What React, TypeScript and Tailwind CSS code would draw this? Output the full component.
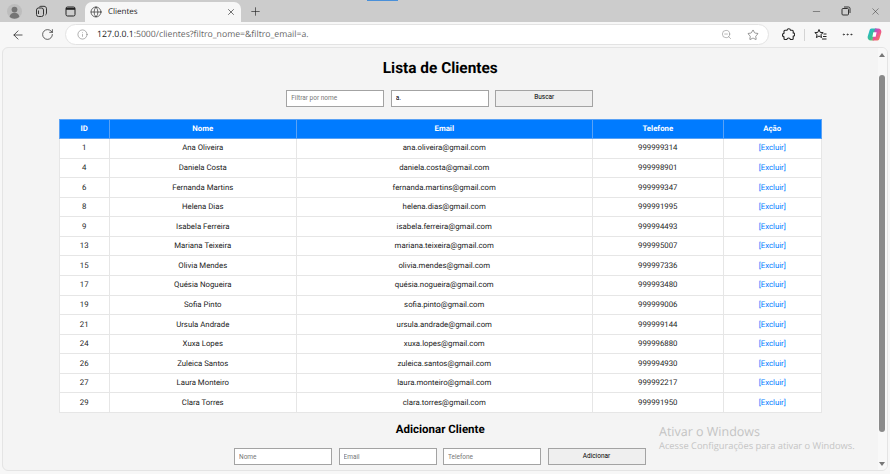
import { ArrowLeft, RotateCw, Info, ZoomOut, Star, MoreHorizontal, Minus, X, Plus, Globe } from "lucide-react";

const rows = [
  [1, "Ana Oliveira", "ana.oliveira@gmail.com", "999999314"],
  [4, "Daniela Costa", "daniela.costa@gmail.com", "999998901"],
  [6, "Fernanda Martins", "fernanda.martins@gmail.com", "999999347"],
  [8, "Helena Dias", "helena.dias@gmail.com", "999991995"],
  [9, "Isabela Ferreira", "isabela.ferreira@gmail.com", "999994493"],
  [13, "Mariana Teixeira", "mariana.teixeira@gmail.com", "999995007"],
  [15, "Olivia Mendes", "olivia.mendes@gmail.com", "999997336"],
  [17, "Quésia Nogueira", "quésia.nogueira@gmail.com", "999993480"],
  [19, "Sofia Pinto", "sofia.pinto@gmail.com", "999999006"],
  [21, "Ursula Andrade", "ursula.andrade@gmail.com", "999999144"],
  [24, "Xuxa Lopes", "xuxa.lopes@gmail.com", "999996880"],
  [26, "Zuleica Santos", "zuleica.santos@gmail.com", "999994930"],
  [27, "Laura Monteiro", "laura.monteiro@gmail.com", "999992217"],
  [29, "Clara Torres", "clara.torres@gmail.com", "999991950"],
];

const inputCls =
  "w-[98px] h-[16.500px] border border-[#a3a3a3] bg-white px-1 text-[6.5px] text-black placeholder:text-[#777] outline-none";
const btnCls = "w-[98px] h-[16.500px] border border-[#a3a3a3] bg-[#efefef] text-[6.5px] text-black";
const th = "border border-[#5aa2f5] font-bold text-white text-[7.800px] p-0";
const td = "border border-[#e6e6e6] p-0 text-[7.800px]";

export default function App() {
  return (
    <div className="relative w-[890px] h-[474px] overflow-hidden bg-[#f7f7f7] font-['Roboto',sans-serif] [text-rendering:geometricPrecision]">
      {/* Loading strip */}
      <div className="absolute left-[367px] top-0 h-px w-[31px] bg-[#4a90d9]" />
      {/* Tab strip */}
      <div className="flex h-[22px] items-end bg-[#cccccc]">
        <div className="flex h-[22px] w-[85px] items-center pl-[7px]">
          <svg width="15" height="15" viewBox="0 0 15 15">
            <circle cx="7.5" cy="7.5" r="7.5" fill="#bdbdbd" />
            <circle cx="7.5" cy="5.6" r="2.9" fill="#757575" />
            <path d="M2.6 13c.4-3 2.4-4.2 4.9-4.2s4.500 1.200 4.900 4.200a7.500 7.500 0 0 1-9.800 0z" fill="#757575" />
          </svg>
          <svg width="13" height="13" viewBox="0 0 13 13" fill="none" stroke="#333" strokeWidth="1" className="ml-[13px]">
            <rect x="1.500" y="3" width="7" height="8.500" rx="2" />
            <path d="M4 2.500c.3-.8 1-1.200 1.800-1.200h3.200c1.500 0 2.500 1 2.500 2.500v4.400c0 .9-.4 1.500-1.100 1.800" />
            <path d="M3.500 5.500v3.500" />
          </svg>
          <svg width="13" height="13" viewBox="0 0 13 13" fill="none" stroke="#222" className="ml-[16px]">
            <rect x="2" y="2" width="9" height="9" rx="1.500" strokeWidth="1" />
            <path d="M2 3.800h9" strokeWidth="2" />
          </svg>
        </div>
        <div className="flex h-[20px] w-[156px] items-center rounded-t-[7px] bg-[#f7f7f7] pl-[5px] pr-[5px]">
          <Globe size={12} strokeWidth={1.300} color="#222" />
          <span className="ml-[6px] flex-1 font-['Open_Sans',sans-serif] text-[8px] text-[#222]">Clientes</span>
          <X size={10} strokeWidth={1.500} color="#222" />
        </div>
        <div className="flex h-[22px] flex-1 items-center pl-[8px]">
          <Plus size={13} strokeWidth={1.200} color="#222" />
          <div className="ml-auto flex items-center gap-[19px] pr-[9px]">
            <Minus size={11} strokeWidth={1.100} color="#333" />
            <svg width="10" height="10" viewBox="0 0 10 10" fill="none" stroke="#333" strokeWidth="1">
              <rect x="1" y="2.500" width="6.500" height="6.500" rx="1" />
              <path d="M3 1h4.500a1.500 1.500 0 0 1 1.500 1.500V7" />
            </svg>
            <X size={11} strokeWidth={1.100} color="#333" />
          </div>
        </div>
      </div>

      {/* Toolbar */}
      <div className="flex h-[25px] items-center bg-[#f7f7f7] pl-[11px]">
        <ArrowLeft size={14} strokeWidth={1.300} color="#222" />
        <RotateCw size={13} strokeWidth={1.300} color="#222" className="ml-[16px]" />
        <div className="ml-[11px] flex h-[21px] w-[704px] items-center rounded-full border border-[#e3e3e3] bg-white pl-[11px] pr-[9px]">
          <Info size={11} strokeWidth={1.100} color="#666" />
          <span className="ml-[9px] flex-1 font-['Open_Sans',sans-serif] text-[8.700px] text-[#666]">
            <span className="text-[#222]">127.0.0.1</span>:5000/clientes?filtro_nome=&filtro_email=a.
          </span>
          <ZoomOut size={11} strokeWidth={1.100} color="#777" />
          <Star size={12} strokeWidth={1.100} color="#444" className="ml-[15px]" />
        </div>
        <svg width="13" height="13" viewBox="0 0 13 13" fill="none" stroke="#222" strokeWidth="1.100" className="ml-[13px]">
          <path d="M5 2.200C5.200 1 6 .8 6.800.8c1 0 1.600.6 1.700 1.400h1.700c.6 0 1 .4 1 1v1.700c1 .1 1.500.9 1.500 1.700s-.5 1.600-1.500 1.700v2.200c0 .6-.4 1-1 1H8.400c-.2-1-.9-1.500-1.800-1.500s-1.600.5-1.800 1.500H3c-.6 0-1-.4-1-1V8.900C1 8.700.5 8 .5 7.100s.5-1.600 1.500-1.800V3.200c0-.6.4-1 1-1z" />
        </svg>
        <div className="ml-[9px] h-[12px] w-px bg-[#d4d4d4]" />
        <svg width="13" height="13" viewBox="0 0 13 13" fill="none" stroke="#222" strokeWidth="1" className="ml-[9px]">
          <path d="M5 1.500l1.200 2.900 3 .2-2.300 2 .7 3-2.600-1.600-2.600 1.600.7-3-2.300-2 3-.2z" />
          <path d="M9.500 6h3M9 8.500h3.500M8 11h4.500" />
        </svg>
        <MoreHorizontal size={13} strokeWidth={1.300} color="#222" className="ml-[14px]" />
        <svg width="15" height="15" viewBox="0 0 15 15" className="ml-[13px]">
          <defs>
            <linearGradient id="cp1" x1="0" y1="0" x2="1" y2="1">
              <stop offset="0" stopColor="#19b5e8" />
              <stop offset="0.6" stopColor="#3fc18a" />
              <stop offset="1" stopColor="#e6c43a" />
            </linearGradient>
            <linearGradient id="cp2" x1="0" y1="0" x2="1" y2="1">
              <stop offset="0" stopColor="#7b5be6" />
              <stop offset="0.5" stopColor="#ec4f9a" />
              <stop offset="1" stopColor="#f2913a" />
            </linearGradient>
          </defs>
          <path d="M4.500 1.500h5L7 13.500H4c-2.500 0-3.800-2-3.300-4L2.500 3.500c.3-1.200 1-2 2-2z" fill="url(#cp1)" />
          <path d="M10.500 13.500h-5L8 1.500h3c2.500 0 3.800 2 3.300 4l-1.800 6c-.3 1.200-1 2-2 2z" fill="url(#cp2)" />
          <path d="M6.300 5.200h3.300L8.700 9.800H5.400z" fill="#ffffff" />
        </svg>
      </div>

      {/* Page */}
      <div className="ml-[2px] flex h-[424px] w-[886px] overflow-hidden rounded-[6px] border border-[#e4e4e4] bg-[#f4f4f4]">
        <main className="flex w-[874.500px] shrink-0 flex-col items-center">
          <h1 className="mt-[10px] h-[20px] text-[15.400px] font-bold leading-[20px] text-black">Lista de Clientes</h1>
          <form className="mr-px mt-[12px] flex gap-[6.500px]">
            <input className={inputCls} placeholder="Filtrar por nome" />
            <input className={inputCls} defaultValue="a." />
            <button type="button" className={btnCls}>Buscar</button>
          </form>
          <table className="mt-[12.500px] w-[762px] table-fixed border-collapse bg-white text-center">
            <colgroup>
              <col className="w-[50px]" />
              <col className="w-[187px]" />
              <col className="w-[296px]" />
              <col className="w-[131px]" />
              <col className="w-[98px]" />
            </colgroup>
            <thead>
              <tr className="h-[19px] bg-[#007bff]">
                <th className={th}>ID</th>
                <th className={th}>Nome</th>
                <th className={th}>Email</th>
                <th className={th}>Telefone</th>
                <th className={th}>Ação</th>
              </tr>
            </thead>
            <tbody className="text-[#222]">
              {rows.map((r) => (
                <tr key={String(r[0])} className="h-[19.570px]">
                  <td className={td}>{r[0]}</td>
                  <td className={td}>{r[1]}</td>
                  <td className={td}>{r[2]}</td>
                  <td className={td}>{r[3]}</td>
                  <td className={td}>
                    <a className="text-[#007bff]">[Excluir]</a>
                  </td>
                </tr>
              ))}
            </tbody>
          </table>
          <h2 className="mt-[8.500px] h-[17px] text-[11.500px] font-bold leading-[17px] text-black">Adicionar Cliente</h2>
          <form className="mr-px mt-[10px] flex gap-[6.500px]">
            <input className={inputCls} placeholder="Nome" />
            <input className={inputCls} placeholder="Email" />
            <input className={inputCls} placeholder="Telefone" />
            <button type="button" className={btnCls}>Adicionar</button>
          </form>
        </main>
        {/* Scrollbar */}
        <div className="flex w-[9.500px] shrink-0 flex-col items-center bg-[#f8f8f8] pt-[5px]">
          <div className="h-0 w-0 border-x-[3px] border-b-[4px] border-x-transparent border-b-[#777]" />
          <div className="mt-[18px] h-[357px] w-[6px] rounded-full bg-[#8a8a8a]" />
          <div className="mt-auto mb-[4px] h-0 w-0 border-x-[3px] border-t-[4px] border-x-transparent border-t-[#777]" />
        </div>
      </div>

      {/* Windows watermark */}
      <div className="absolute left-[659px] top-[423px] font-['Open_Sans',sans-serif] text-[#c4c4c4]">
        <div className="text-[12.500px] leading-[17px]">Ativar o Windows</div>
        <div className="text-[9.300px] leading-[12px]">Acesse Configurações para ativar o Windows.</div>
      </div>
    </div>
  );
}
